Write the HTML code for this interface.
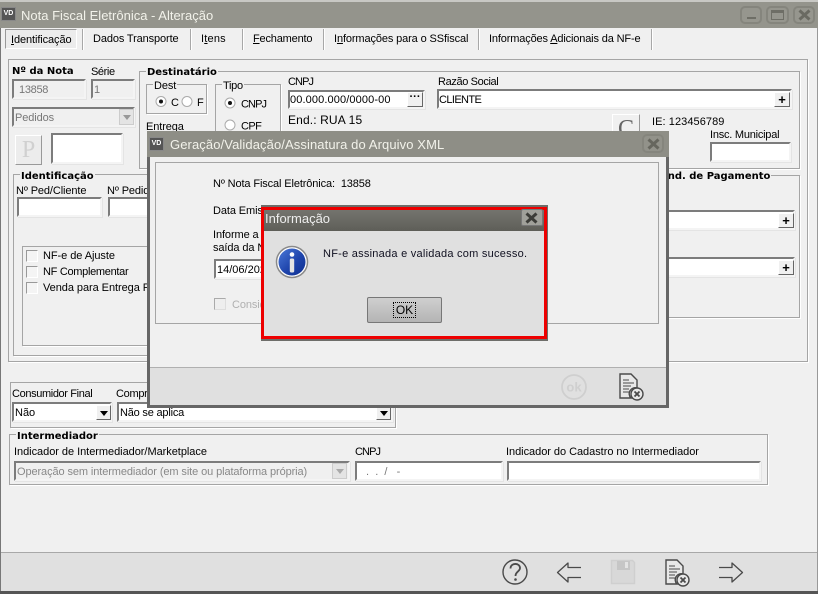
<!DOCTYPE html>
<html><head><meta charset="utf-8"><style>
html,body{margin:0;padding:0;width:818px;height:594px;overflow:hidden;background:#f0f0f0}
body{position:relative;font:11px "Liberation Sans","DejaVu Sans",sans-serif;color:#000}
div,span.a,svg{position:absolute;box-sizing:border-box}
.t{white-space:nowrap;letter-spacing:-.1px;line-height:13px}
.b{font:bold 10px "DejaVu Sans",sans-serif;white-space:nowrap;line-height:13px;background:#f0f0f0;padding:0 1px}
.g{border:1px solid #a5a5a5;box-shadow:1px 1px 0 #fff}
.i{background:#fff;border:2px solid;border-color:#7c7c7c #f4f4f4 #f4f4f4 #7c7c7c;box-shadow:1px 1px 0 #e4e4e4}
.dis{background:#f0f0f0}
.sep{width:1px;background:#a8a8a8;top:29px;height:21px;box-shadow:1px 0 0 #fff}
.btn{background:#f0f0f0;border:1px solid;border-color:#fff #666 #666 #fff;text-align:center;font-weight:bold;line-height:13px}
.cb{width:12px;height:12px;background:#f4f4f4;border:1px solid;border-color:#999 #fff #fff #999}
u{text-decoration:underline}
.wb{border:2px solid #85857d;border-radius:5px;background:#96968e}
</style></head><body>

<!-- main window -->
<div style="left:0;top:0;width:818px;height:2px;background:#c8c8c4"></div>
<div style="left:0;top:2px;width:818px;height:26px;background:#94948c"></div>
<div style="left:0;top:28px;width:1px;height:566px;background:#777"></div>
<div style="left:817px;top:28px;width:1px;height:566px;background:#999"></div>
<div style="left:0;top:591px;width:818px;height:3px;background:#555"></div>
<div style="left:1px;top:7px;width:15px;height:14px;background:#555;color:#fff;font:bold 7px 'Liberation Sans';line-height:12px;text-align:center;border:1px solid #888">VD</div>
<div class="t" style="left:21px;top:8px;font-size:13px;line-height:16px;color:#f2f2ea;letter-spacing:0">Nota Fiscal Eletrônica - Alteração</div>
<div class="wb" style="left:740px;top:6px;width:22px;height:18px"><div style="left:5px;top:9px;width:9px;height:2px;background:#6e6e66"></div></div>
<div class="wb" style="left:766px;top:6px;width:23px;height:18px"><div style="left:3px;top:2px;width:13px;height:10px;border:1px solid #6e6e66;border-top-width:3px"></div></div>
<div class="wb" style="left:793px;top:6px;width:22px;height:18px"><svg style="left:3px;top:1px" width="13" height="12"><path d="M1.5 1.5L11.5 10.500M11.500 1.500L1.500 10.500" stroke="#6a6a62" stroke-width="3"/></svg></div>

<!-- tabs -->
<div style="left:5px;top:29px;width:72px;height:20px;border:1px solid;border-color:#999 #fff #fff #999;background:#ececec"></div>
<div class="t" style="left:11px;top:34px"><u>I</u>dentificação</div>
<div class="sep" style="left:82px"></div>
<div class="t" style="left:93px;top:33px;letter-spacing:-.12px">Dados Transporte</div>
<div class="sep" style="left:190px"></div>
<div class="t" style="left:201px;top:33px;letter-spacing:.2px">I<u>t</u>ens</div>
<div class="sep" style="left:242px"></div>
<div class="t" style="left:253px;top:33px;letter-spacing:-.18px"><u>F</u>echamento</div>
<div class="sep" style="left:323px"></div>
<div class="t" style="left:334px;top:33px;letter-spacing:-.12px">I<u>n</u>formações para o SSfiscal</div>
<div class="sep" style="left:478px"></div>
<div class="t" style="left:489px;top:33px;letter-spacing:-.15px">Informações <u>A</u>dicionais da NF-e</div>
<div class="sep" style="left:651px"></div>

<!-- outer frame -->
<div class="g" style="left:8px;top:59px;width:800px;height:303px"></div>

<div class="b" style="left:11px;top:65px;background:none">Nº da Nota</div>
<div class="t" style="left:91px;top:66px;letter-spacing:-.4px">Série</div>
<div class="i dis" style="left:12px;top:79px;width:74px;height:20px;color:#777;padding:3px 5px;line-height:13px;letter-spacing:-.3px">13858</div>
<div class="i dis" style="left:91px;top:79px;width:44px;height:20px;color:#777;padding:3px 1px;line-height:13px">1</div>
<div class="i dis" style="left:12px;top:107px;width:123px;height:20px;color:#777;padding:3px 1px;line-height:13px;letter-spacing:-.1px">Pedidos
  <div style="left:105px;top:0;width:15px;height:16px;background:#e4e4e4;border:1px solid #ccc"><svg style="left:3px;top:5px" width="8" height="5"><path d="M0 0h8L4 5z" fill="#999"/></svg></div></div>
<div class="btn" style="left:15px;top:135px;width:27px;height:30px;border-color:#fff #999 #999 #fff;background:#ececec;font:24px 'Liberation Serif',serif;line-height:28px;color:#d0d0d0">P</div>
<div class="i" style="left:51px;top:133px;width:72px;height:31px"></div>

<!-- destinatario -->
<div class="g" style="left:139px;top:71px;width:661px;height:98px"></div>
<div class="b" style="left:146px;top:66px">Destinatário</div>
<div class="g" style="left:146px;top:84px;width:61px;height:30px"></div>
<div class="t" style="left:153px;top:80px;background:#f0f0f0;padding:0 1px">Dest</div>
<svg style="left:154px;top:95px" width="60" height="14">
 <circle cx="7" cy="6.500" r="5" fill="#fff" stroke="#aaa"/><circle cx="7" cy="6.500" r="2" fill="#111"/>
 <circle cx="33" cy="6.500" r="5" fill="#fff" stroke="#aaa"/>
 <text x="17" y="11" font-size="11" font-family="Liberation Sans">C</text>
 <text x="43" y="11" font-size="11" font-family="Liberation Sans">F</text>
</svg>
<div class="t" style="left:146px;top:121px">Entrega</div>
<div class="g" style="left:215px;top:84px;width:66px;height:60px"></div>
<div class="t" style="left:222px;top:80px;background:#f0f0f0;padding:0 1px;letter-spacing:-.3px">Tipo</div>
<svg style="left:224px;top:96px" width="50" height="40">
 <circle cx="6" cy="7" r="5" fill="#fff" stroke="#aaa"/><circle cx="6" cy="7" r="2" fill="#111"/>
 <circle cx="6" cy="29" r="5" fill="#fff" stroke="#aaa"/>
 <text x="17" y="11.500" font-size="11" letter-spacing="-.9" font-family="Liberation Sans">CNPJ</text>
 <text x="17" y="33.500" font-size="11" letter-spacing="-.6" font-family="Liberation Sans">CPF</text>
</svg>
<div class="t" style="left:288px;top:76px;letter-spacing:-.9px">CNPJ</div>
<div class="i" style="left:288px;top:90px;width:137px;height:19px;padding:2px 0;line-height:13px;letter-spacing:.12px">00.000.000/0000-00
  <div class="btn" style="left:117px;top:0;width:16px;height:15px;line-height:9px;letter-spacing:0">···</div></div>
<div class="t" style="left:288px;top:114px;font-size:12px;letter-spacing:.13px">End.: RUA 15</div>
<div class="t" style="left:438px;top:76px;letter-spacing:-.37px">Razão Social</div>
<div class="i" style="left:437px;top:89px;width:355px;height:20px;padding:3px 0;line-height:13px;letter-spacing:-.6px">CLIENTE
  <div class="btn" style="left:335px;top:1px;width:16px;height:15px;font-size:13px;line-height:13px;letter-spacing:0">+</div></div>
<div class="btn" style="left:612px;top:114px;width:28px;height:30px;font:24px 'Liberation Serif',serif;line-height:28px;color:#666;border-color:#fff #999 #999 #fff">C</div>
<div class="t" style="left:652px;top:116px;letter-spacing:.07px">IE: 123456789</div>
<div class="t" style="left:710px;top:129px;letter-spacing:-.23px">Insc. Municipal</div>
<div class="i" style="left:710px;top:142px;width:81px;height:20px"></div>

<!-- identificacao -->
<div class="g" style="left:13px;top:174px;width:300px;height:182px"></div>
<div class="b" style="left:20px;top:170px">Identificação</div>
<div class="t" style="left:16px;top:185px;letter-spacing:-.11px">Nº Ped/Cliente</div>
<div class="t" style="left:107px;top:185px;letter-spacing:-.11px">Nº Pedido</div>
<div class="i" style="left:17px;top:197px;width:85px;height:20px"></div>
<div class="i" style="left:108px;top:197px;width:60px;height:20px"></div>
<div class="g" style="left:22px;top:246px;width:200px;height:100px"></div>
<div class="cb" style="left:26px;top:250px"></div><div class="t" style="left:43px;top:250px;letter-spacing:-.06px">NF-e de Ajuste</div>
<div class="cb" style="left:26px;top:266px"></div><div class="t" style="left:43px;top:266px;letter-spacing:-.3px">NF Complementar</div>
<div class="cb" style="left:26px;top:282px"></div><div class="t" style="left:43px;top:282px;letter-spacing:-.06px">Venda para Entrega Futura</div>

<!-- pagamento -->
<div class="g" style="left:600px;top:175px;width:200px;height:143px"></div>
<div class="b" style="left:663px;top:170px">Ind. de Pagamento</div>
<div class="i" style="left:600px;top:210px;width:195px;height:20px"><div class="btn" style="left:176px;top:1px;width:16px;height:15px;font-size:13px;line-height:13px">+</div></div>
<div class="i" style="left:600px;top:257px;width:195px;height:20px"><div class="btn" style="left:176px;top:1px;width:16px;height:15px;font-size:13px;line-height:13px">+</div></div>

<!-- consumidor -->
<div class="g" style="left:10px;top:382px;width:386px;height:46px"></div>
<div class="t" style="left:12px;top:388px;background:#f0f0f0;letter-spacing:-.37px">Consumidor Final</div>
<div class="t" style="left:116px;top:388px;background:#f0f0f0;letter-spacing:-.3px">Comprador Presente</div>
<div class="i" style="left:12px;top:402px;width:100px;height:20px;padding:3px 1px;line-height:13px">Não
  <div class="btn" style="left:82px;top:1px;width:15px;height:15px"><svg style="left:3px;top:5px" width="8" height="5"><path d="M0 0h8L4 5z" fill="#000"/></svg></div></div>
<div class="i" style="left:117px;top:402px;width:276px;height:20px;padding:3px 1px;line-height:13px;letter-spacing:-.2px">Não se aplica
  <div class="btn" style="left:257px;top:1px;width:15px;height:15px"><svg style="left:3px;top:5px" width="8" height="5"><path d="M0 0h8L4 5z" fill="#000"/></svg></div></div>

<!-- intermediador -->
<div class="g" style="left:9px;top:434px;width:759px;height:51px"></div>
<div class="b" style="left:16px;top:430px">Intermediador</div>
<div class="t" style="left:14px;top:446px;letter-spacing:-.04px">Indicador de Intermediador/Marketplace</div>
<div class="i dis" style="left:14px;top:461px;width:336px;height:20px;padding:3px 1px;line-height:13px;color:#888;letter-spacing:-.1px">Operação sem intermediador (em site ou plataforma própria)
  <div style="left:316px;top:0;width:15px;height:16px;background:#e4e4e4;border:1px solid #ccc"><svg style="left:3px;top:5px" width="8" height="5"><path d="M0 0h8L4 5z" fill="#aaa"/></svg></div></div>
<div class="t" style="left:355px;top:446px;letter-spacing:-.9px">CNPJ</div>
<div class="i" style="left:355px;top:461px;width:148px;height:20px;padding:3px 6px;line-height:13px;color:#777;white-space:pre;letter-spacing:0"> .  .  /   -</div>
<div class="t" style="left:506px;top:446px;letter-spacing:-.04px">Indicador do Cadastro no Intermediador</div>
<div class="i" style="left:507px;top:461px;width:254px;height:20px"></div>

<!-- bottom toolbar -->
<div style="left:1px;top:552px;width:816px;height:39px;background:#e0e0e0;border-top:1px solid #a8a8a8"></div>
<svg style="left:500px;top:555px" width="250" height="34" fill="none" stroke="#4a4a4a">
 <circle cx="15" cy="17" r="12" stroke-width="1.400"/>
 <path d="M10.500 13.500c0-6 9.500-6 9.500-.5 0 3.500-4.500 3.500-4.500 8" stroke-width="1.800"/><circle cx="15.500" cy="24.500" r="1.300" fill="#4a4a4a" stroke="none"/>
 <path d="M81 12.500H68V8L57.500 17.500 68 27V22.500H81" stroke-width="1.300" stroke-linejoin="round"/>
 <path d="M111.500 5.500h21l2 2v21h-23z" fill="#d8d8d8" stroke="#cfcfcf" stroke-width="1.400"/><rect x="117" y="6" width="13" height="9" fill="#c6c6c6" stroke="none"/><rect x="125" y="7" width="3" height="6" fill="#e4e4e4" stroke="none"/>
 <path d="M166 5h11l6 6v8a6 6 0 0 0-6 10h-11z" fill="#e8e8e8" stroke-width="1.400"/><path d="M169 11h6M169 14h11M169 17h8M169 20h6M169 23h6" stroke-width="1"/>
 <circle cx="183" cy="25" r="6" fill="#e8e8e8" stroke-width="1.400"/><path d="M180.500 22.500l5 5M185.500 22.500l-5 5" stroke-width="1.800"/>
 <path d="M219 12.500H232V8L242.500 17.500 232 27V22.500H219" stroke-width="1.300" stroke-linejoin="round"/>
</svg>

<!-- modal 1 -->
<div style="left:147px;top:131px;width:522px;height:277px;background:#f0f0f0;border:3px solid #666;border-top:0"></div>
<div style="left:147px;top:131px;width:522px;height:26px;background:#8e8e86"></div>
<div style="left:149px;top:137px;width:15px;height:14px;background:#555;color:#fff;font:bold 7px 'Liberation Sans';line-height:12px;text-align:center;border:1px solid #888">VD</div>
<div class="t" style="left:170px;top:137px;font-size:13px;line-height:16px;color:#f2f2ea;letter-spacing:.1px">Geração/Validação/Assinatura do Arquivo XML</div>
<div class="wb" style="left:642px;top:134px;width:22px;height:19px;background:#92928a"><svg style="left:3px;top:2px" width="13" height="12"><path d="M1.500 1.500L11.500 10.500M11.500 1.500L1.500 10.500" stroke="#66665e" stroke-width="3"/></svg></div>
<div style="left:155px;top:162px;width:504px;height:162px;border:1px solid #a5a5a5"></div>
<div class="t" style="left:213px;top:178px;letter-spacing:-.12px">Nº Nota Fiscal Eletrônica:&nbsp; 13858</div>
<div class="t" style="left:213px;top:205px;letter-spacing:-.1px">Data Emissão</div>
<div class="t" style="left:213px;top:229px;letter-spacing:-.1px">Informe a data de</div>
<div class="t" style="left:213px;top:242px;letter-spacing:-.1px">saída da Nota</div>
<div class="i" style="left:214px;top:259px;width:60px;height:20px;padding:3px 1px;line-height:13px;letter-spacing:0">14/06/2021</div>
<div class="cb" style="left:214px;top:298px;border-color:#aaa #ddd #ddd #aaa;background:#eee"></div>
<div class="t" style="left:232px;top:299px;color:#b0b0b0">Considerar</div>
<div style="left:150px;top:367px;width:516px;height:38px;background:#e0e0e0;border-top:1px solid #b0b0b0"></div>
<svg style="left:555px;top:370px" width="100" height="32" fill="none">
 <circle cx="19" cy="17" r="12" stroke="#cfcfcf" stroke-width="1.800"/>
 <text x="19" y="21.500" text-anchor="middle" font-family="Liberation Sans" font-weight="bold" font-size="13" fill="#cfcfcf" stroke="none">ok</text>
 <path d="M65 4h11l6 6v8a6 6 0 0 0-6 10H65z" fill="#e8e8e8" stroke="#4a4a4a" stroke-width="1.400"/><path d="M68 10h6M68 13h11M68 16h8M68 19h6M68 22h6" stroke="#4a4a4a"/>
 <circle cx="82" cy="24" r="6" fill="#e8e8e8" stroke="#4a4a4a" stroke-width="1.400"/><path d="M79.500 21.500l5 5M84.500 21.500l-5 5" stroke="#4a4a4a" stroke-width="1.800"/>
</svg>

<!-- modal 2 -->
<div style="left:261px;top:205px;width:287px;height:136px;background:#6e6e6a"></div>
<div style="left:261px;top:207px;width:286px;height:132px;background:#e0e0e0;border:3px solid #ed0000"></div>
<div style="left:264px;top:210px;width:280px;height:21px;background:linear-gradient(#74746e,#5e5e58)"></div>
<div class="t" style="left:265px;top:211px;font-size:13px;line-height:16px;color:#eee;letter-spacing:0">Informação</div>
<div style="left:521px;top:209px;width:22px;height:17px;background:#a0a09a;border-radius:2px;border:1px solid #777"><svg style="left:3px;top:2px" width="13" height="12"><path d="M1.500 1.500L11.500 10.500M11.500 1.500L1.500 10.500" stroke="#3c3c38" stroke-width="3"/></svg></div>
<svg style="left:275px;top:245px" width="34" height="34">
 <defs><linearGradient id="bl" x1="0" y1="0" x2="1" y2="1"><stop offset="0" stop-color="#4a78d8"/><stop offset=".55" stop-color="#1f45ac"/><stop offset="1" stop-color="#0d2f90"/></linearGradient></defs>
 <circle cx="17" cy="17" r="15.500" fill="#fff" stroke="#8a8a8a" stroke-width="1.500"/>
 <circle cx="17" cy="17" r="13.500" fill="url(#bl)"/>
 <circle cx="17" cy="9.500" r="2.300" fill="#fff"/>
 <rect x="14.800" y="13.500" width="4.400" height="14" rx="1.500" fill="#e4e4e4"/>
</svg>
<div class="t" style="left:323px;top:248px;color:#101020;letter-spacing:.25px">NF-e assinada e validada com sucesso.</div>
<div style="left:367px;top:297px;width:75px;height:26px;background:linear-gradient(#cfcfcf,#b4b4b4);border:1px solid #777;border-radius:2px"></div>
<div style="left:393px;top:302px;width:23px;height:16px;border:1px dotted #000;text-align:center;line-height:14px;font-size:12px">OK</div>

</body></html>
